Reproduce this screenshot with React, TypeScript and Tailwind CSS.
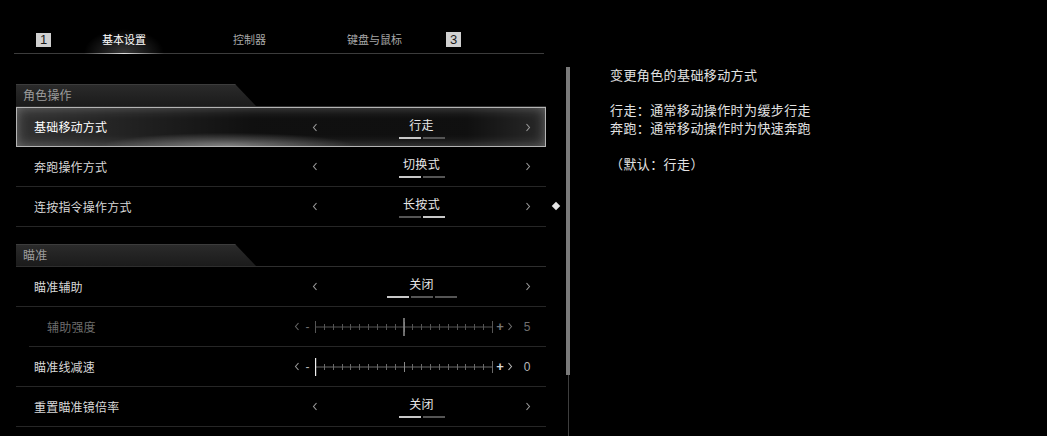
import React from "react";

const font = "font-['Noto_Sans_CJK_SC','Noto_Sans',sans-serif]";

function Chevron({ dir, color = "#9a9a9a" }: { dir: "l" | "r"; color?: string }) {
  return (
    <svg width="6" height="9" viewBox="0 0 6 9" className="block">
      <polyline
        points={dir === "l" ? "4.5,1 1.5,4.5 4.5,8" : "1.5,1 4.5,4.5 1.5,8"}
        fill="none"
        stroke={color}
        strokeWidth="1.1"
      />
    </svg>
  );
}

function Segments({ count, active }: { count: number; active: number }) {
  return (
    <div className="flex gap-[2px] mt-[4px]">
      {Array.from({ length: count }).map((_, i) => (
        <div key={i} className={i === active ? "w-[22px] h-[2px] bg-[#c8c8c8]" : "w-[22px] h-[2px] bg-[#555]"} />
      ))}
    </div>
  );
}

function Picker({ value, count, active }: { value: string; count: number; active: number }) {
  return (
    <div className="w-[221px] mr-[14px] flex items-center">
      <div className="w-[8px] flex justify-center"><Chevron dir="l" /></div>
      <div className="flex-1 flex flex-col items-center pt-[1px]">
        <span className="text-[12px] leading-[16px] text-[#e8e8e8] tracking-[0.3px]">{value}</span>
        <Segments count={count} active={active} />
      </div>
      <div className="w-[8px] flex justify-center"><Chevron dir="r" /></div>
    </div>
  );
}

function Track({ pos, dim }: { pos: number; dim: boolean }) {
  const w = 177;
  const step = w / 20;
  const tick = dim ? "#555" : "#6a6a6a";
  const thumbX = 0.5 + pos * step * 2;
  return (
    <svg width={w + 1} height="20" viewBox={`0 0 ${w + 1} 20`} className="block">
      <line x1="0.5" y1="10" x2={w + 0.5} y2="10" stroke={tick} strokeWidth="1" />
      {Array.from({ length: 21 }).map((_, i) => {
        const x = Math.round(i * step) + 0.5;
        const end = i === 0 || i === 20;
        const mid = i === 10;
        return (
          <line
            key={i}
            x1={x}
            x2={x}
            y1={end ? 4 : mid ? 5 : 7}
            y2={end ? 16 : mid ? 15 : 13}
            stroke={mid && !dim ? "#888" : tick}
            strokeWidth="1"
          />
        );
      })}
      <line
        x1={thumbX}
        x2={thumbX}
        y1="1"
        y2="19"
        stroke={dim ? "#8a8a8a" : "#f0f0f0"}
        strokeWidth={dim ? 1.6 : 1.4}
      />
    </svg>
  );
}

function Slider({ pos, value, dim }: { pos: number; value: string; dim: boolean }) {
  const c = dim ? "#6f6f6f" : "#b8b8b8";
  return (
    <div className="flex items-center mr-[14px]">
      <div className="w-[8px] flex justify-center"><Chevron dir="l" color={dim ? "#666" : "#999"} /></div>
      <div className={`w-[13px] text-center text-[12px] leading-[16px] font-['Liberation_Sans',sans-serif] ${dim ? "text-[#6f6f6f]" : "text-[#b8b8b8]"}`}>-</div>
      <div className="ml-[1px]"><Track pos={pos} dim={dim} /></div>
      <div className={`w-[14px] text-center text-[13px] leading-[16px] font-bold font-['Liberation_Sans',sans-serif] ${dim ? "text-[#777]" : "text-[#d8d8d8]"}`}>+</div>
      <div className="w-[6px] flex justify-center"><Chevron dir="r" color={c} /></div>
      <div className={`ml-[9px] w-[10px] text-center text-[12px] leading-[16px] font-['Liberation_Sans_Narrow','Liberation_Sans',sans-serif] ${dim ? "text-[#6f6f6f]" : "text-[#b8b8b8]"}`}>{value}</div>
    </div>
  );
}

function SectionHeader({ title }: { title: string }) {
  return (
    <div className="h-[23px] border-b border-[#2e2e2e]">
      <div className="h-full w-[240px] bg-[linear-gradient(to_bottom,#2b2b2b,#1b1b1b)] shadow-[inset_0_1px_0_#3c3c3c] [clip-path:polygon(0_0,219px_0,240px_100%,0_100%)] flex items-center pl-[7px]">
        <span className="text-[12px] leading-[16px] text-[#9c9c9c] tracking-[0.2px]">{title}</span>
      </div>
    </div>
  );
}

function Row({ label, children, indent, dim, selected }: { label: string; children: React.ReactNode; indent?: boolean; dim?: boolean; selected?: boolean }) {
  if (selected) {
    return (
      <div className="h-[40px] flex items-center border border-[#b4b4b4] bg-[#0b0b0b] shadow-[inset_0_0_12px_rgba(255,255,255,0.3)] bg-[radial-gradient(ellipse_24%_35%_at_40%_100%,rgba(255,255,255,0.38),transparent),linear-gradient(to_right,rgba(255,255,255,0.16),rgba(255,255,255,0.02)_45%,rgba(255,255,255,0.02)_85%,rgba(255,255,255,0.12))]">
        <span className="flex-1 pl-[17px] text-[12px] leading-[16px] text-white tracking-[0.2px]">{label}</span>
        <div className="-mr-[1px] flex">{children}</div>
      </div>
    );
  }
  return (
    <div className={`h-[40px] flex items-center border-b border-[#262626] ${indent ? "ml-[13px]" : ""}`}>
      <span className={`flex-1 text-[12px] leading-[16px] tracking-[0.2px] pl-[18px] ${dim ? "text-[#6c6c6c]" : "text-[#d8d8d8]"}`}>{label}</span>
      {children}
    </div>
  );
}

export default function App() {
  return (
    <div className={`w-[1047px] h-[436px] bg-black overflow-hidden flex ${font}`}>
      {/* left: settings list */}
      <div className="w-[546px] shrink-0 pl-[16px] flex flex-col">
        <div className="h-[54px] flex items-stretch border-b border-[#3c3c3c] mr-[2px] -ml-[2px] pl-[2px]">
          <div className="ml-[20px] pt-[33px]">
            <div className="w-[15px] h-[14px] bg-[#d0d0d0] text-[#1a1a1a] text-[13px] leading-[14px] text-center font-['Liberation_Sans_Narrow','Liberation_Sans',sans-serif]">1</div>
          </div>
          <div className="ml-[33px] w-[80px] pt-[31px] flex flex-col items-center bg-[radial-gradient(ellipse_50%_45%_at_50%_100%,rgba(255,255,255,0.22),transparent)] relative">
            <span className="text-[11px] leading-[16px] text-white">基本设置</span>
            <div className="absolute bottom-[-1px] left-0 right-0 h-[1px] bg-[linear-gradient(to_right,transparent,#e0e0e0,transparent)]" />
          </div>
          <div className="ml-[69px] pt-[31px] flex flex-col">
            <span className="text-[11px] leading-[16px] text-[#a8a8a8]">控制器</span>
          </div>
          <div className="ml-[81px] pt-[31px] flex flex-col">
            <span className="text-[11px] leading-[16px] text-[#a8a8a8]">键盘与鼠标</span>
          </div>
          <div className="ml-[44px] pt-[32px]">
            <div className="w-[15px] h-[15px] bg-[#d0d0d0] text-[#1a1a1a] text-[13px] leading-[15px] text-center font-['Liberation_Sans_Narrow','Liberation_Sans',sans-serif]">3</div>
          </div>
        </div>

        <div className="mt-[30px]">
          <SectionHeader title="角色操作" />
          <Row label="基础移动方式" selected>
            <Picker value="行走" count={2} active={0} />
          </Row>
          <Row label="奔跑操作方式">
            <Picker value="切换式" count={2} active={0} />
          </Row>
          <Row label="连按指令操作方式">
            <Picker value="长按式" count={2} active={1} />
          </Row>
        </div>

        <div className="mt-[17px]">
          <SectionHeader title="瞄准" />
          <Row label="瞄准辅助">
            <Picker value="关闭" count={3} active={0} />
          </Row>
          <Row label="辅助强度" indent dim>
            <Slider pos={5} value="5" dim />
          </Row>
          <Row label="瞄准线减速">
            <Slider pos={0} value="0" dim={false} />
          </Row>
          <Row label="重置瞄准镜倍率">
            <Picker value="关闭" count={2} active={0} />
          </Row>
        </div>
      </div>

      {/* focus marker */}
      <div className="w-[20px] shrink-0 pt-[203px] flex justify-center">
        <div className="w-[6px] h-[6px] bg-[#e6e6e6] rotate-45" />
      </div>

      {/* scrollbar */}
      <div className="w-[4px] shrink-0 pt-[67px] flex flex-col items-center">
        <div className="w-[4px] h-[308px] bg-[#7a7a7a]" />
        <div className="w-[1px] flex-1 bg-[#3e3e3e]" />
      </div>

      {/* description */}
      <div className="pl-[40px] pt-[66px] text-[13px] leading-[18px] tracking-[0.4px] text-[#e2e2e2]">
        <p>变更角色的基础移动方式</p>
        <p className="mt-[17px]">行走：通常移动操作时为缓步行走</p>
        <p>奔跑：通常移动操作时为快速奔跑</p>
        <p className="mt-[18px]">（默认：行走）</p>
      </div>
    </div>
  );
}
